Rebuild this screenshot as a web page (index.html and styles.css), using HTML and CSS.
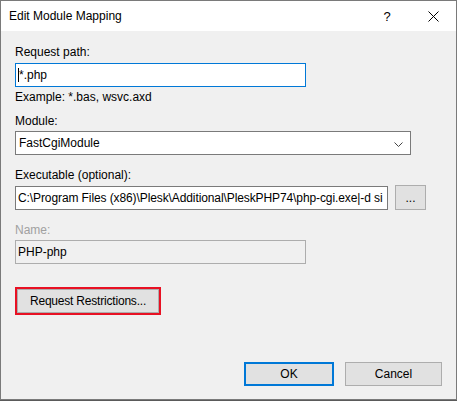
FILE: index.html
```html
<!DOCTYPE html>
<html lang="en">
<head>
    <meta charset="UTF-8">
    <title>Edit Module Mapping</title>
    <link rel="stylesheet" href="styles.css">
</head>
<body>

    <div class="dialog">
        <div class="titlebar">
            <span class="title">Edit Module Mapping</span>
            <span class="help">?</span>
            <span class="close">
                <svg width="11" height="11" viewBox="0 0 11 11">
                    <path d="M0.5 0.5 L10.5 10.5 M10.5 0.5 L0.5 10.5" stroke="#000" stroke-width="1" fill="none"/>
                </svg>
            </span>
        </div>

        <div class="content">
            <div class="label">Request path:</div>
            <div class="textbox short focused"><span class="caret"></span>*.php</div>
            <div class="hint">Example: *.bas, wsvc.axd</div>

            <div class="label gap">Module:</div>
            <div class="textbox combo">
                FastCgiModule
                <svg class="chevron" width="9" height="5" viewBox="0 0 9 5">
                    <path d="M0.5 0.5 L4.5 4.5 L8.5 0.5" stroke="#444" stroke-width="1" fill="none"/>
                </svg>
            </div>

            <div class="label gap-big">Executable (optional):</div>
            <div class="row">
                <div class="textbox exec">C:\Program Files (x86)\Plesk\Additional\PleskPHP74\php-cgi.exe|-d si</div>
                <button class="btn browse">...</button>
            </div>

            <div class="label gap-big disabled">Name:</div>
            <div class="textbox short readonly">PHP-php</div>

            <div class="highlight">
                <button class="btn restrict">Request Restrictions...</button>
            </div>
        </div>

        <div class="footer">
            <button class="btn ok">OK</button>
            <button class="btn cancel">Cancel</button>
        </div>
    </div>
    <div class="below"></div>

</body>
</html>
```

FILE: styles.css
```css
body {
    margin: 0;
    background-color: #3a3a3a;
    font-family: 'Liberation Sans', Arial, sans-serif;
    font-size: 12px;
    color: #000;
}
.dialog {
    width: 457px;
    height: 400px;
    box-sizing: border-box;
    border: 1px solid #7a7a7a;
    background-color: #f0f0f0;
    display: flex;
    flex-direction: column;
}
.titlebar {
    height: 30px;
    background-color: #fff;
    display: flex;
    align-items: center;
    padding-left: 8px;
    flex-shrink: 0;
}
.title {
    flex: 1;
    font-size: 12px;
    color: #000;
}
.help {
    width: 46px;
    text-align: center;
    font-size: 13px;
}
.close {
    width: 46px;
    height: 30px;
    display: flex;
    align-items: center;
    justify-content: center;
}
.content {
    padding: 13px 0 0 14px;
    flex: 1;
    display: flex;
    flex-direction: column;
    align-items: flex-start;
}
.label {
    line-height: 16px;
    height: 16px;
    margin-bottom: 3px;
}
.label.gap {
    margin-top: 8px;
    margin-bottom: 2px;
}
.label.gap-big {
    margin-top: 12px;
    margin-bottom: 2px;
}
.label.disabled {
    color: #a0a0a0;
}
.hint {
    line-height: 16px;
    margin-top: 2px;
}
.textbox {
    height: 24px;
    box-sizing: border-box;
    border: 1px solid #7a7a7a;
    background-color: #fff;
    display: flex;
    align-items: center;
    padding-left: 2px;
    white-space: nowrap;
    overflow: hidden;
}
.textbox.short {
    width: 291px;
}
.textbox.focused {
    border-color: #0078d7;
}
.caret {
    width: 1px;
    height: 14px;
    background-color: #000;
}
.textbox.combo {
    width: 396px;
    position: relative;
    padding-left: 3px;
}
.chevron {
    position: absolute;
    right: 7px;
    top: 10px;
}
.row {
    display: flex;
    align-items: center;
    gap: 7px;
}
.textbox.exec {
    width: 373px;
    letter-spacing: -0.1px;
}
.textbox.readonly {
    background-color: #f0f0f0;
    border-color: #adadad;
}
.btn {
    font-family: inherit;
    font-size: 12px;
    color: #000;
    background-color: #e1e1e1;
    border: 1px solid #adadad;
    height: 24px;
    padding: 0;
    margin: 0;
}
.browse {
    width: 31px;
    height: 25px;
}
.highlight {
    margin-top: 23px;
    border: 2px solid #e81123;
    display: flex;
}
.restrict {
    width: 142px;
    height: 24px;
    letter-spacing: -0.2px;
}
.footer {
    display: flex;
    justify-content: flex-end;
    gap: 11px;
    padding: 0 14px 13px 0;
}
.ok {
    width: 90px;
    border: 2px solid #0078d7;
}
.cancel {
    width: 97px;
}
.below {
    height: 1px;
    background-color: #5a5a5a;
}
```
